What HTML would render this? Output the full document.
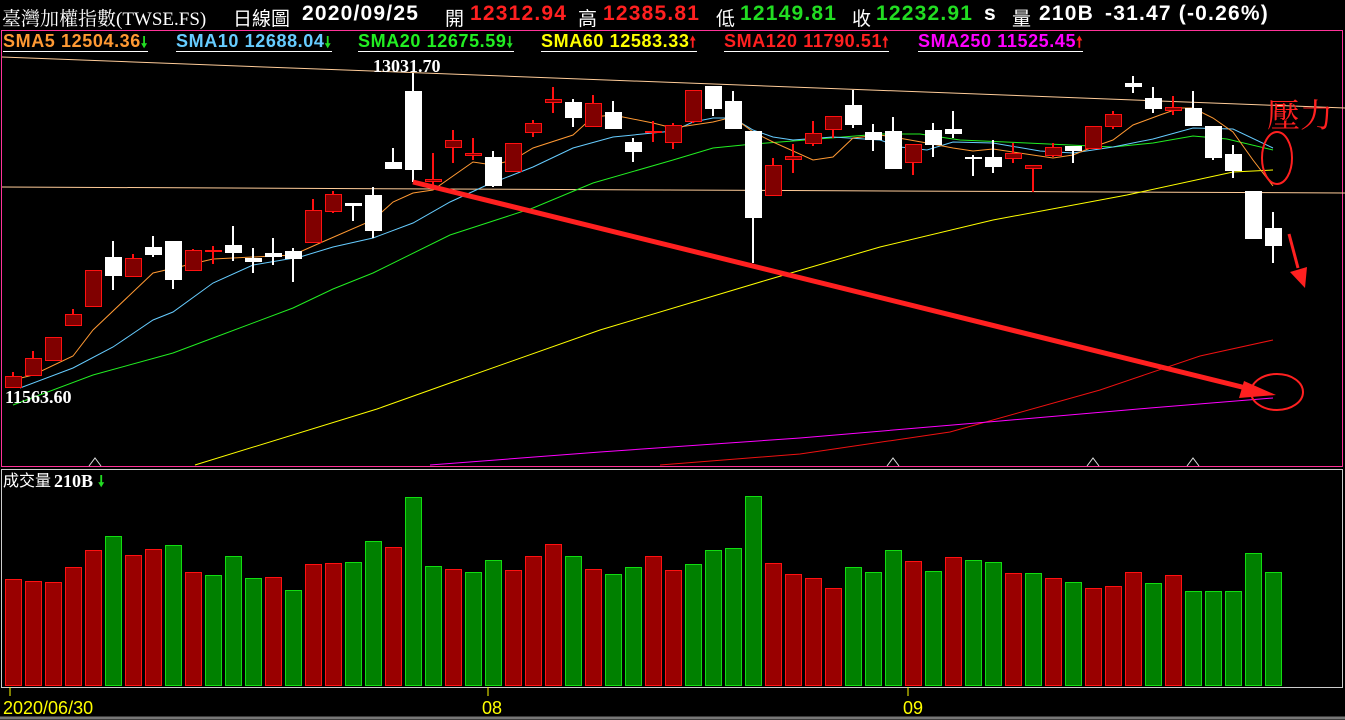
<!DOCTYPE html>
<html><head><meta charset="utf-8"><style>
html,body{margin:0;padding:0;background:#000;width:1345px;height:720px;overflow:hidden}
.t{position:absolute;white-space:nowrap;font-family:"Liberation Sans","Noto Sans CJK TC",sans-serif}
.h{top:2px;font-size:21px;font-weight:bold;color:#fff;letter-spacing:1.2px}
.c{font-weight:normal;font-size:19px;top:4px;letter-spacing:0}
.l{top:32px;font-size:18px;font-weight:bold;border-bottom:1px solid #fff;padding-bottom:0px;line-height:18px;letter-spacing:0.6px}
.a{font-family:"DejaVu Sans",sans-serif;font-size:15px}
</style></head><body>
<div class="t h" style="left:2px;font-weight:normal;font-family:'Liberation Serif','Noto Serif CJK SC',serif;font-size:19px;top:4px;letter-spacing:0">臺灣加權指數(TWSE.FS)</div>
<div class="t h c" style="left:233px">日線圖</div>
<div class="t h" style="left:302px">2020/09/25</div>
<div class="t h c" style="left:445px">開</div>
<div class="t h" style="left:470px;color:#ff2020">12312.94</div>
<div class="t h c" style="left:578px">高</div>
<div class="t h" style="left:603px;color:#ff2020">12385.81</div>
<div class="t h c" style="left:716px">低</div>
<div class="t h" style="left:740px;color:#22dd22">12149.81</div>
<div class="t h c" style="left:852px">收</div>
<div class="t h" style="left:876px;color:#22dd22">12232.91</div>
<div class="t h" style="left:984px">s</div>
<div class="t h c" style="left:1012px">量</div>
<div class="t h" style="left:1039px">210B</div>
<div class="t h" style="left:1105px">-31.47 (-0.26%)</div>

<div class="t l" style="left:3px;color:#ff9933">SMA5 12504.36<span class="a" style="color:#22dd22">🠗</span></div>
<div class="t l" style="left:176px;color:#66ccff">SMA10 12688.04<span class="a" style="color:#22dd22">🠗</span></div>
<div class="t l" style="left:358px;color:#22ee22">SMA20 12675.59<span class="a" style="color:#22dd22">🠗</span></div>
<div class="t l" style="left:541px;color:#ffff00">SMA60 12583.33<span class="a" style="color:#ff2020">🠕</span></div>
<div class="t l" style="left:724px;color:#ff2020">SMA120 11790.51<span class="a" style="color:#ff2020">🠕</span></div>
<div class="t l" style="left:918px;color:#ff00ff">SMA250 11525.45<span class="a" style="color:#ff2020">🠕</span></div>

<svg id="s" width="1345" height="720" style="position:absolute;left:0;top:0" xmlns="http://www.w3.org/2000/svg">
<rect x="1.5" y="30.5" width="1341" height="436" fill="none" stroke="#ff3399"/>
<rect x="1.5" y="469.5" width="1341" height="218" fill="none" stroke="#cccccc"/>
<line x1="0" y1="718" x2="1345" y2="718" stroke="#777" stroke-width="3"/>
<g id="g"></g>
<text x="373" y="72" fill="#fff" font-family="Liberation Serif,serif" font-weight="bold" font-size="18">13031.70</text>
<text x="5" y="403" fill="#fff" font-family="Liberation Serif,serif" font-weight="bold" font-size="18">11563.60</text>
<text x="3" y="486" fill="#fff" font-family="Liberation Sans,Noto Sans CJK TC,sans-serif" font-size="16">成交量</text>
<text x="54" y="487" fill="#fff" font-family="Liberation Serif,serif" font-weight="bold" font-size="18">210B</text>
<text x="98" y="486" fill="#22dd22" font-size="15" font-weight="bold" font-family="DejaVu Sans">🠗</text>
<g stroke="#ffff00"><line x1="10" y1="687" x2="10" y2="696"/><line x1="488" y1="687" x2="488" y2="696"/><line x1="908" y1="687" x2="908" y2="696"/></g>
<g fill="#ffff00" font-family="Liberation Sans,sans-serif" font-size="18"><text x="3" y="714">2020/06/30</text><text x="482" y="714">08</text><text x="903" y="714">09</text></g>
</svg>
<script>
var C=[[1,372,376,388,388],[1,351,358,376,376],[1,337,337,361,361],[1,309,314,326,326],[1,270,270,307,307],[0,241,257,276,290],[1,254,258,277,277],[0,236,247,255,257],[0,241,241,280,289],[1,249,250,271,271],[2,246,250,251,264],[0,226,245,253,261],[0,248,258,262,273],[0,238,253,257,265],[0,248,251,259,282],[1,199,210,243,243],[1,191,194,212,213],[0,203,203,206,221],[0,187,195,231,238],[0,148,162,169,169],[0,73,91,170,182],[2,153,179,182,188],[1,130,140,148,163],[2,138,153,156,160],[0,151,157,186,187],[1,143,143,172,172],[1,120,123,133,137],[1,87,99,103,113],[0,99,102,118,127],[1,95,103,127,127],[0,101,112,129,129],[0,138,142,152,162],[2,121,131,133,142],[1,123,125,143,149],[1,90,90,122,123],[0,86,86,109,116],[0,91,101,129,129],[0,131,131,218,263],[1,158,165,196,196],[1,144,156,160,173],[1,121,133,144,146],[1,116,116,130,138],[0,90,105,125,128],[0,124,132,140,151],[0,117,131,169,169],[1,144,144,163,175],[0,123,130,145,157],[0,111,129,134,138],[0,155,157,159,176],[0,140,157,167,173],[1,143,153,159,163],[1,165,165,169,192],[1,143,147,156,157],[0,146,146,151,163],[1,126,126,149,149],[1,111,114,127,129],[0,76,83,87,93],[0,87,98,109,113],[2,96,107,111,115],[0,91,108,126,126],[0,126,126,158,160],[0,145,154,171,178],[0,191,191,239,239],[0,212,228,246,263]];
var V=[[579,1],[581,1],[582,1],[567,1],[550,1],[536,0],[555,1],[549,1],[545,0],[572,1],[575,0],[556,0],[578,0],[577,1],[590,0],[564,1],[563,1],[562,0],[541,0],[547,1],[497,0],[566,0],[569,1],[572,0],[560,0],[570,1],[556,1],[544,1],[556,0],[569,1],[574,0],[567,0],[556,1],[570,1],[564,0],[550,0],[548,0],[496,0],[563,1],[574,1],[578,1],[588,1],[567,0],[572,0],[550,0],[561,1],[571,0],[557,1],[560,0],[562,0],[573,1],[573,0],[578,1],[582,0],[588,1],[586,1],[572,1],[583,0],[575,1],[591,0],[591,0],[591,0],[553,0],[572,0]];
var L={"#ffcc99":[[2,57],[1345,108]],"#ffcc99 ":[[2,187],[1345,193]],
"#ffff00":[[195,465],[377,409],[450,383],[600,330],[767,280],[880,247],[993,220],[1127,195],[1233,172],[1273,170]],
"#ee1111":[[660,465],[800,454],[950,432],[1100,390],[1200,356],[1273,340]],
"#ff00ff":[[430,465],[600,452],[800,438],[1000,421],[1150,408],[1273,398]],
"#22ee22":[[13,405],[93,375],[173,353],[213,338],[293,308],[333,289],[373,273],[450,235],[533,208],[593,183],[673,160],[713,148],[753,144],[793,141],[880,134],[920,134],[960,140],[1027,143],[1113,147],[1153,143],[1193,136],[1227,139],[1273,150]],
"#66ccff":[[20,388],[73,368],[113,347],[153,320],[173,312],[213,283],[253,265],[300,257],[333,247],[373,238],[413,223],[450,202],[487,185],[533,167],[573,148],[613,137],[673,131],[693,122],[713,118],[733,118],[753,130],[773,137],[793,140],[833,137],[880,140],[900,147],[927,150],[953,142],[993,143],[1040,151],[1073,153],[1113,147],[1153,139],[1193,128],[1233,129],[1273,148]],
"#ff9933":[[13,380],[33,375],[73,356],[93,330],[153,273],[213,259],[293,255],[320,243],[373,220],[393,202],[413,193],[433,190],[473,162],[493,165],[513,160],[533,148],[573,135],[593,117],[613,115],[653,123],[673,128],[713,122],[733,117],[753,132],[773,142],[813,160],[833,157],[853,138],[880,135],[893,137],[927,143],[953,148],[973,151],[993,149],[1013,152],[1053,158],[1073,155],[1093,147],[1113,140],[1133,125],[1160,115],[1180,108],[1193,108],[1213,118],[1233,132],[1253,160],[1273,186]]};
var h='';
V.forEach(function(v,i){var x=5.5+20*i;h+='<rect x="'+x+'" y="'+v[0]+'.5" width="16" height="'+(685-v[0])+'" fill="'+(v[1]?'#990000':'#008000')+'" stroke="'+(v[1]?'#ff1111':'#11dd11')+'"/>';});
for(var k in L){h+='<polyline fill="none" stroke="'+k.trim()+'" stroke-width="1" points="'+L[k].map(function(p){return p.join(',')}).join(' ')+'"/>';}
C.forEach(function(c,i){var cx=13+20*i,col=c[0]==0?'#fff':'#ff1111';
h+='<line x1="'+cx+'" y1="'+c[1]+'" x2="'+cx+'" y2="'+c[4]+'" stroke="'+col+'" stroke-width="2"/>';
var bh=Math.max(c[3]-c[2],2);
if(c[0]==0)h+='<rect x="'+(cx-8)+'" y="'+c[2]+'" width="17" height="'+bh+'" fill="#fff"/>';
else h+='<rect x="'+(cx-7.5)+'" y="'+(c[2]+.5)+'" width="16" height="'+Math.max(bh-1,1)+'" fill="#800000" stroke="#ff1111"/>';});
[95,893,1093,1193].forEach(function(x){h+='<polyline points="'+(x-6)+',466 '+x+',458 '+(x+6)+',466" fill="none" stroke="#ddd"/>';});
h+='<line x1="413" y1="182" x2="1250" y2="389" stroke="#ff2020" stroke-width="5"/>';
h+='<polygon points="1276,395 1244,381 1239,398" fill="#ff2020"/>';
h+='<ellipse cx="1277" cy="392" rx="26" ry="18" fill="none" stroke="#ff2020" stroke-width="2"/>';
h+='<ellipse cx="1277" cy="158" rx="15" ry="26" fill="none" stroke="#ff2020" stroke-width="2"/>';
h+='<line x1="1289" y1="234" x2="1298" y2="268" stroke="#ff2020" stroke-width="3"/>';
h+='<polygon points="1305,288 1290,272 1307,267" fill="#ff2020"/>';
h+='<text x="1267" y="127" fill="#ff2020" font-size="33" font-family="Noto Serif CJK SC,serif">壓力</text>';
document.getElementById('g').innerHTML=h;
</script>
</body></html>
